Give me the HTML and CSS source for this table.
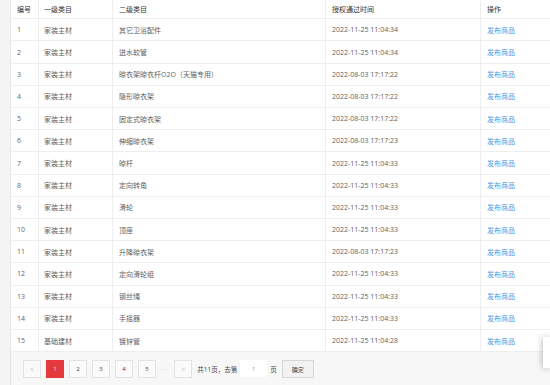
FILE: index.html
```html
<!DOCTYPE html>
<html lang="zh">
<head>
<meta charset="utf-8">
<link rel="stylesheet" href="styles.css">
</head>
<body>
<div class="page">
  <div class="grid">
    <div class="row head"><span>编号</span><span>一级类目</span><span>二级类目</span><span>授权通过时间</span><span>操作</span></div>
    <div class="row"><span>1</span><span>家装主材</span><span>其它卫浴配件</span><span>2022-11-25 11:04:34</span><span class="link">发布商品</span></div>
    <div class="row"><span>2</span><span>家装主材</span><span>进水软管</span><span>2022-11-25 11:04:34</span><span class="link">发布商品</span></div>
    <div class="row"><span>3</span><span>家装主材</span><span>晾衣架晾衣杆O2O（天猫专用）</span><span>2022-08-03 17:17:22</span><span class="link">发布商品</span></div>
    <div class="row"><span>4</span><span>家装主材</span><span>隐形晾衣架</span><span>2022-08-03 17:17:22</span><span class="link">发布商品</span></div>
    <div class="row"><span>5</span><span>家装主材</span><span>固定式晾衣架</span><span>2022-08-03 17:17:22</span><span class="link">发布商品</span></div>
    <div class="row"><span>6</span><span>家装主材</span><span>伸缩晾衣架</span><span>2022-08-03 17:17:23</span><span class="link">发布商品</span></div>
    <div class="row"><span>7</span><span>家装主材</span><span>晾杆</span><span>2022-11-25 11:04:33</span><span class="link">发布商品</span></div>
    <div class="row"><span>8</span><span>家装主材</span><span>定向转角</span><span>2022-11-25 11:04:33</span><span class="link">发布商品</span></div>
    <div class="row"><span>9</span><span>家装主材</span><span>滑轮</span><span>2022-11-25 11:04:33</span><span class="link">发布商品</span></div>
    <div class="row"><span>10</span><span>家装主材</span><span>顶座</span><span>2022-11-25 11:04:33</span><span class="link">发布商品</span></div>
    <div class="row"><span>11</span><span>家装主材</span><span>升降晾衣架</span><span>2022-08-03 17:17:23</span><span class="link">发布商品</span></div>
    <div class="row"><span>12</span><span>家装主材</span><span>定向滑轮组</span><span>2022-11-25 11:04:33</span><span class="link">发布商品</span></div>
    <div class="row"><span>13</span><span>家装主材</span><span>钢丝绳</span><span>2022-11-25 11:04:33</span><span class="link">发布商品</span></div>
    <div class="row"><span>14</span><span>家装主材</span><span>手摇器</span><span>2022-11-25 11:04:33</span><span class="link">发布商品</span></div>
    <div class="row"><span>15</span><span>基础建材</span><span>镀锌管</span><span>2022-11-25 11:04:28</span><span class="link">发布商品</span></div>
  </div>
  <div class="pager">
    <span class="pbtn arrow">&lt;</span>
    <span class="pbtn active">1</span>
    <span class="pbtn">2</span>
    <span class="pbtn">3</span>
    <span class="pbtn">4</span>
    <span class="pbtn">5</span>
    <span class="dots">···</span>
    <span class="pbtn arrow">&gt;</span>
    <span class="ptext">共11页，去第</span>
    <span class="pinput">1</span>
    <span class="ptext">页</span>
    <span class="ok">确定</span>
  </div>
</div>
<div class="float-box"></div>
</body>
</html>
```

FILE: styles.css
```css
html, body {
  margin: 0;
  padding: 0;
}
body {
  background: #f4f4f4;
  font-family: "Open Sans", "Noto Sans CJK SC", sans-serif;
  font-size: 7px;
  color: #5f5f5f;
  overflow: hidden;
  height: 385px;
}
.page {
  margin-left: 10px;
  border-left: 1px solid #e6e6e6;
  background: #fff;
  height: 385px;
  display: flex;
  flex-direction: column;
}
.grid {
  display: flex;
  flex-direction: column;
}
.row {
  display: grid;
  grid-template-columns: 28px 74px 213px 155px 1fr;
  height: 22.2px;
  box-sizing: border-box;
  border-bottom: 1px solid #eeeeee;
}
.row.head {
  height: 19.3px;
  color: #333;
}
.row > span {
  display: flex;
  align-items: center;
  padding-left: 6px;
  border-right: 1px solid #eeeeee;
  white-space: nowrap;
  overflow: hidden;
}
.row > span:last-child { border-right: none; }
.row > span:nth-child(2) { padding-left: 5px; }
.link {
  color: #4d96e3;
}
.pager {
  flex: 1;
  background: #f7f7f7;
  display: flex;
  align-items: flex-start;
  padding: 8px 0 0 12px;
  font-size: 6px;
  color: #555;
}
.pbtn {
  width: 16px;
  height: 16px;
  border: 1px solid #e2e2e2;
  background: #fafafa;
  display: flex;
  align-items: center;
  justify-content: center;
  margin-right: 5px;
  color: #444;
}
.pbtn.arrow { color: #bbb; font-size: 7px; }
.pbtn.active {
  background: #e43a3d;
  border-color: #e43a3d;
  color: #fde;
}
.dots {
  height: 18px;
  display: flex;
  align-items: center;
  margin: 0 6px 0 1px;
  color: #bbb;
  letter-spacing: 0.5px;
}
.ptext {
  height: 18px;
  display: flex;
  align-items: center;
  color: #444;
  font-size: 6.5px;
}
.pinput {
  width: 27px;
  height: 17px;
  margin: 0 3px;
  background: #fff;
  display: flex;
  align-items: center;
  justify-content: center;
  color: #999;
}
.ok {
  width: 30px;
  height: 16px;
  margin-left: 5px;
  border: 1px solid #d6d6d6;
  background: #f2f2f2;
  display: flex;
  align-items: center;
  justify-content: center;
  color: #444;
}
.float-box {
  position: absolute;
  left: 543px;
  top: 337px;
  width: 7px;
  height: 31px;
  background: #fff;
  box-shadow: -1px 0 6px rgba(0,0,0,0.25);
}
```
